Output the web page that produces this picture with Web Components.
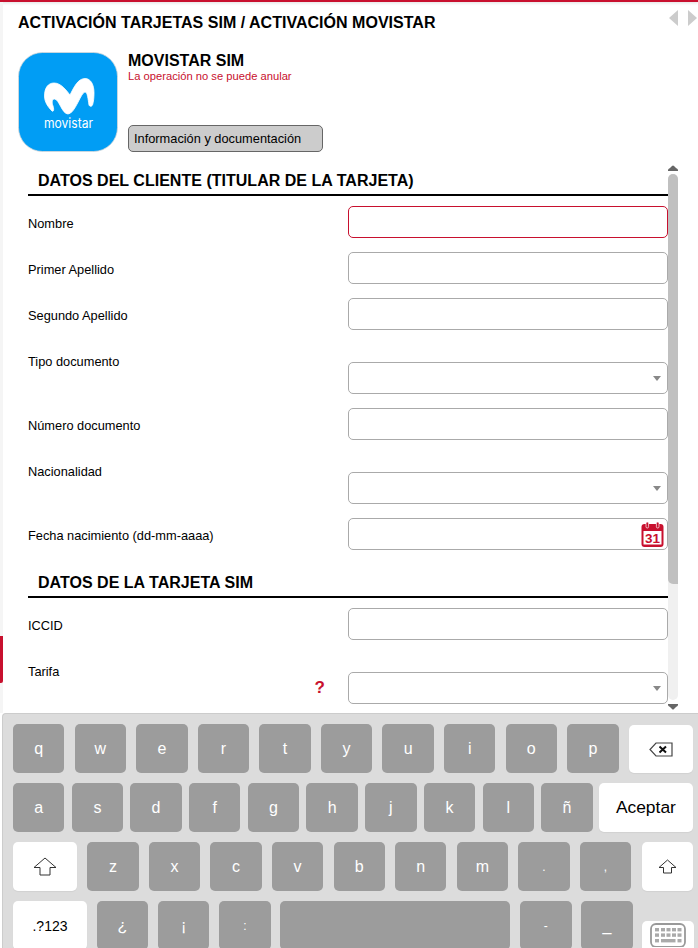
<!DOCTYPE html>
<html lang="es">
<head>
<meta charset="utf-8">
<title>Activación Movistar</title>
<style>
  html, body { margin: 0; height: 948px; overflow: hidden; background: #fff; }
  body { font-family: "Liberation Sans", Arial, sans-serif; color: #000; }
</style>
</head>
<body>
<sim-app>
  <sim-product slot="product" name="MOVISTAR SIM" warning="La operación no se puede anular" action="Información y documentación"></sim-product>

  <form-section title="DATOS DEL CLIENTE (TITULAR DE LA TARJETA)">
    <form-row label="Nombre" focused></form-row>
    <form-row label="Primer Apellido"></form-row>
    <form-row label="Segundo Apellido"></form-row>
    <form-row label="Tipo documento" type="select"></form-row>
    <form-row label="Número documento"></form-row>
    <form-row label="Nacionalidad" type="select"></form-row>
    <form-row label="Fecha nacimiento (dd-mm-aaaa)" type="date"></form-row>
  </form-section>
  <form-section title="DATOS DE LA TARJETA SIM">
    <form-row label="ICCID"></form-row>
    <form-row label="Tarifa" type="select" hint="?"></form-row>
  </form-section>

  <sim-keyboard slot="keyboard"></sim-keyboard>
</sim-app>

<script>
const RED = '#c8102e';

class SimApp extends HTMLElement {
  constructor() {
    super();
    this.attachShadow({ mode: 'open' }).innerHTML = `
      <style>
        :host { display: flex; flex-direction: column; width: 698px; height: 948px; overflow: hidden; }
        .topline { flex: none; height: 2px; background: ${RED}; box-shadow: 0 1px 3px rgba(0,0,0,.15); }
        .body { flex: none; height: 711px; display: flex; }
        .rail { flex: none; width: 3px; background: #f5f5f5; padding-top: 634px; box-sizing: border-box; }
        .rail i { display: block; height: 47px; background: ${RED}; border-bottom-right-radius: 2px; }
        .main { flex: 1; min-width: 0; display: flex; flex-direction: column; }
        header { flex: none; height: 50px; display: flex; justify-content: space-between; padding: 8px 1px 0 15px; box-sizing: border-box; }
        h1 { margin: 4px 0 0; font-size: 16px; line-height: 18px; font-weight: bold; letter-spacing: .02px; }
        .arrows { display: flex; gap: 10px; }
        .arrows svg { display: block; }
        .content { flex: 1; min-height: 0; display: flex; padding-top: 12px; }
        .form { flex: none; width: 665px; padding: 8px 0 0 25px; box-sizing: border-box; }
      </style>
      <div class="topline"></div>
      <div class="body">
        <div class="rail"><i></i></div>
        <div class="main">
          <header>
            <h1>ACTIVACIÓN TARJETAS SIM / ACTIVACIÓN MOVISTAR</h1>
            <div class="arrows">
              <svg width="9" height="16" viewBox="0 0 9 16"><path d="M9 0V16L0 8Z" fill="#ccc"/></svg>
              <svg width="9" height="16" viewBox="0 0 9 16"><path d="M0 0V16L9 8Z" fill="#ccc"/></svg>
            </div>
          </header>
          <slot name="product"></slot>
          <div class="content">
            <div class="form"><slot></slot></div>
            <sim-scrollbar></sim-scrollbar>
          </div>
        </div>
      </div>
      <slot name="keyboard"></slot>`;
  }
}

class SimProduct extends HTMLElement {
  connectedCallback() {
    if (this.shadowRoot) return;
    this.attachShadow({ mode: 'open' }).innerHTML = `
      <style>
        :host { display: flex; flex: none; gap: 10px; height: 100px; padding-left: 15px; }
        .logo { flex: none; width: 100px; height: 100px; }
        .info { display: flex; flex-direction: column; align-items: flex-start; }
        h2 { margin: 0; font-size: 16px; line-height: 18px; font-weight: bold; }
        p { margin: 0; font-size: 11.2px; line-height: 12px; color: ${RED}; }
        button { margin-top: auto; width: 195px; height: 27px; padding: 0 0 1px 5px; text-align: left; font: 12.8px "Liberation Sans", Arial, sans-serif; color: #000;
                 background: #ccc; border: 1px solid #666; border-radius: 5px; box-sizing: border-box; }
      </style>
      <svg class="logo" viewBox="0 0 100 100">
        <rect x=".5" y=".5" width="99" height="99" rx="24" fill="#019df4" stroke="#d9d9d9" stroke-width=".8"/>
        <path fill="#fff" stroke="#fff" stroke-width=".8" stroke-linejoin="round" d="M34 59C30 55 26.5 50 26.5 44C26.5 36 30 31 36 31C43 31 48 38 52 43C56 35 60 26.5 67 26.5C73 26.5 76 33 76 41C76 46 75.5 50 74.5 53C73.5 55 71.5 54.5 71 53C70 47 69.5 40 67 40C63 40 57 62 50 62C44 62 41 47 36.5 47C34 47 33.5 50 35 54C36 57 36 60 34 59Z"/>
        <text x="26" y="76" textLength="49" lengthAdjust="spacingAndGlyphs" font-family="Inter, sans-serif" font-size="13" fill="#fff">movistar</text>
      </svg>
      <div class="info">
        <h2>${this.getAttribute('name')}</h2>
        <p>${this.getAttribute('warning')}</p>
        <button type="button">${this.getAttribute('action')}</button>
      </div>`;
  }
}

class FormSection extends HTMLElement {
  connectedCallback() {
    if (this.shadowRoot) return;
    this.attachShadow({ mode: 'open' }).innerHTML = `
      <style>
        :host { display: block; margin-bottom: 24px; }
        h3 { margin: 0 0 10px; padding: 0 0 4px 10px; height: 18px; font-size: 16px; line-height: 18px; font-weight: bold; letter-spacing: .02px; border-bottom: 2px solid #000; width: 630px; }
      </style>
      <h3>${this.getAttribute('title')}</h3>
      <slot></slot>`;
    this.removeAttribute('title');
  }
}

class FormRow extends HTMLElement {
  connectedCallback() {
    if (this.shadowRoot) return;
    const type = this.getAttribute('type') || 'text';
    const tall = type === 'select';
    const hint = this.getAttribute('hint');
    let trail = '';
    if (type === 'select') {
      trail = '<svg class="caret" width="8" height="5" viewBox="0 0 8 5"><path d="M0 0H8L4 5Z" fill="#888"/></svg>';
    } else if (type === 'date') {
      trail = `<svg class="cal" width="23" height="25" viewBox="0 0 23 25">
        <rect x=".5" y="2" width="22" height="23" rx="3" fill="${RED}"/>
        <rect x="2.5" y="9" width="18" height="13.5" fill="#fff"/>
        <rect x="5" y="0" width="2.6" height="6" rx="1.3" fill="${RED}" stroke="#fff" stroke-width=".7"/>
        <rect x="15.4" y="0" width="2.6" height="6" rx="1.3" fill="${RED}" stroke="#fff" stroke-width=".7"/>
        <text x="11.5" y="21" text-anchor="middle" font-family="Liberation Sans, sans-serif" font-weight="bold" font-size="13.5" fill="${RED}">31</text>
      </svg>`;
    }
    this.attachShadow({ mode: 'open' }).innerHTML = `
      <style>
        :host { display: flex; margin-bottom: 14px; height: ${tall ? 50 : 32}px; font-size: 12.8px; }
        .label { flex: none; height: 36px; line-height: 36px; }
        .left { flex: none; width: 320px; display: flex; flex-direction: column; }
        .hint { margin: -11px 23px 0 auto; font-size: 17px; line-height: 18px; font-weight: bold; color: ${RED}; }
        .box { flex: none; align-self: flex-end; width: 320px; height: 32px; display: flex; align-items: center; box-sizing: border-box;
               background: #fff; border: 1px solid ${this.hasAttribute('focused') ? RED : '#aaa'}; border-radius: 5px; }
        input { flex: 1; min-width: 0; height: 100%; padding: 0 8px; border: 0; outline: 0; background: transparent; font: 12.8px "Liberation Sans", Arial, sans-serif; }
        .caret { flex: none; margin-right: 6px; }
        .cal { flex: none; margin-right: 3px; }
      </style>
      <div class="left">
        <div class="label">${this.getAttribute('label')}</div>
        ${hint ? `<div class="hint">${hint}</div>` : ''}
      </div>
      <div class="box"><input type="text" aria-label="${this.getAttribute('label')}">${trail}</div>`;
  }
}

class SimScrollbar extends HTMLElement {
  constructor() {
    super();
    this.attachShadow({ mode: 'open' }).innerHTML = `
      <style>
        :host { flex: none; width: 10px; padding-top: 1px; display: flex; flex-direction: column; align-items: stretch; }
        svg { display: block; flex: none; }
        .track { flex: none; height: 526px; margin-top: 3px; background: #f0f0f0; border-radius: 5px; }
        .thumb { height: 410px; background: #c0c0c0; border-radius: 5px 5px 0 5px; }
        .down { margin-top: 4px; }
      </style>
      <svg width="10" height="6" viewBox="0 0 10 6"><path d="M0 6V5Q0 4 2 3L4 1Q5 0 6 1L8 3Q10 4 10 5V6Z" fill="#666"/></svg>
      <div class="track"><div class="thumb"></div></div>
      <svg class="down" width="10" height="6" viewBox="0 0 10 6"><path d="M0 0H10V1Q10 2 8 3L6 5Q5 6 4 5L2 3Q0 2 0 1Z" fill="#666"/></svg>`;
  }
}

class KeyCap extends HTMLElement {
  connectedCallback() {
    if (this.shadowRoot) return;
    this.attachShadow({ mode: 'open' }).innerHTML = `
      <style>
        :host { display: flex; align-items: center; justify-content: center; flex: 0 0 auto; width: 51.4px; height: 49px; padding-top: 1px; box-sizing: border-box;
                background: #9c9c9c; color: #fff; border-radius: 5px; font-size: 16px; }
        :host([light]) { background: #fff; color: #000; padding-top: 0; box-shadow: 0 1px 1px rgba(0,0,0,.05); }
        :host([small]) { font-size: 14px; }
        :host([tiny]) { font-size: 12px; }
      </style>
      <slot></slot>`;
  }
}

const SHIFT = '<svg width="24" height="19" viewBox="0 0 24 19"><path d="M12 1L23 10.5H17V18H7V10.5H1Z" fill="#fff" stroke="#333" stroke-width="1"/></svg>';
const SHIFT_SMALL = '<svg width="19" height="15" viewBox="0 0 19 15"><path d="M9.5 1L18 8.5H13.5V14H5.5V8.5H1Z" fill="#fff" stroke="#333" stroke-width="1"/></svg>';
const BACKSPACE = `<svg width="24" height="15" viewBox="0 0 24 15">
  <path d="M23 1H7L1 7.5L7 14H23Z" fill="#fff" stroke="#444" stroke-width="1.2"/>
  <path d="M10.5 4.5L17 10.5M17 4.5L10.5 10.5" stroke="#111" stroke-width="2"/>
</svg>`;
const KEYBOARD_ICON = `<svg width="36" height="24" viewBox="0 0 36 24">
  <rect x="1" y="1" width="34" height="23" rx="5" fill="#fff" stroke="#999" stroke-width="1.8"/>
  <g fill="#aaa">
    ${[5, 11, 16.5, 22, 27.5].map((x) => `<rect x="${x}" y="5" width="4" height="3.4"/><rect x="${x}" y="10.4" width="4" height="3.4"/>`).join('')}
    <rect x="5" y="16" width="4" height="3.4"/><rect x="11" y="16" width="14.5" height="3.4"/><rect x="27.5" y="16" width="4" height="3.4"/>
  </g>
</svg>`;

class SimKeyboard extends HTMLElement {
  constructor() {
    super();
    const keys = (s) => s.split(' ').map((k) => `<key-cap${'.,:-'.includes(k) ? ' tiny' : ''}>${k}</key-cap>`).join('');
    this.attachShadow({ mode: 'open' }).innerHTML = `
      <style>
        :host { display: block; flex: none; height: 235px; margin-left: 2px; padding: 10px 0 0 10px; box-sizing: border-box; overflow: hidden;
                background: #dcdcdc; border-top: 1px solid #ccc; border-left: 1px solid #ccc; border-top-left-radius: 4px; }
        .row { display: flex; gap: 10.2px; height: 49px; margin-bottom: 10px; }
        .row.tight { gap: 7.3px; }
        .row.last { gap: 9.8px; margin-bottom: 0; }
        .wide { width: 64px; }
        .accept { width: 94px; margin-left: -1px; font-size: 17.4px; }
        .sym { width: 74px; }
        .space { width: 230px; }
        .kbd { width: 52px; margin: 20px 0 0 -1px; align-items: flex-start; padding-top: 2px; }
        .lower { height: 48px; margin-top: 1px; }
        .end { margin-left: .6px; }
      </style>
      <div class="row">${keys('q w e r t y u i o p')}<key-cap class="wide lower" light>${BACKSPACE}</key-cap></div>
      <div class="row tight">${keys('a s d f g h j k l ñ')}<key-cap class="accept" light>Aceptar</key-cap></div>
      <div class="row"><key-cap class="wide" light>${SHIFT}</key-cap>${keys('z x c v b n m . ,')}<key-cap class="end" light>${SHIFT_SMALL}</key-cap></div>
      <div class="row last"><key-cap class="sym" light small>.?123</key-cap>${keys('¿ ¡ :')}<key-cap class="space"></key-cap>${keys('- _')}<key-cap class="kbd" light>${KEYBOARD_ICON}</key-cap></div>`;
  }
}

customElements.define('sim-app', SimApp);
customElements.define('sim-product', SimProduct);
customElements.define('form-section', FormSection);
customElements.define('form-row', FormRow);
customElements.define('sim-scrollbar', SimScrollbar);
customElements.define('key-cap', KeyCap);
customElements.define('sim-keyboard', SimKeyboard);
</script>
</body>
</html>
